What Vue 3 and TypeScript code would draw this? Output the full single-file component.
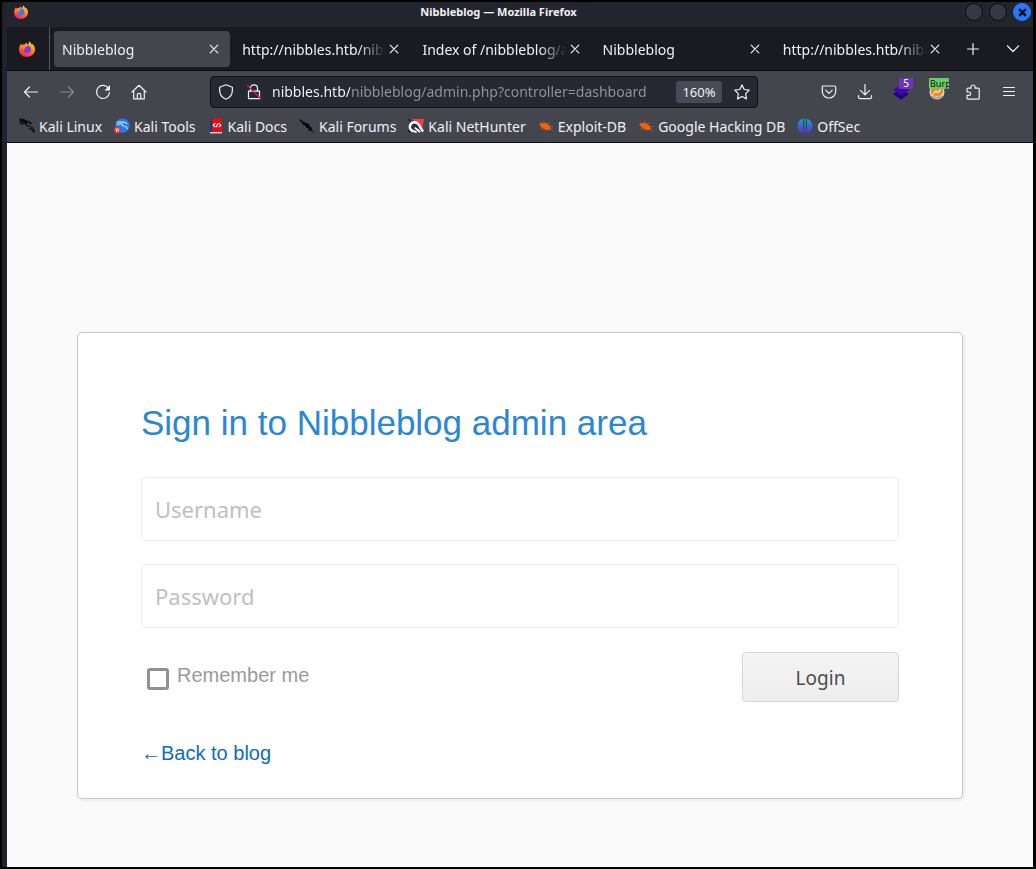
<script setup lang="ts">
import { ref } from 'vue'

interface Tab {
  id: number
  title: string
}

interface Bookmark {
  label: string
  icon: string
}

const tabs: Tab[] = [
  { id: 1, title: 'Nibbleblog' },
  { id: 2, title: 'http://nibbles.htb/nibbleblog/' },
  { id: 3, title: 'Index of /nibbleblog/admin' },
  { id: 4, title: 'Nibbleblog' },
  { id: 5, title: 'http://nibbles.htb/nibbleblog/' },
]

const bookmarks: Bookmark[] = [
  { label: 'Kali Linux', icon: 'dragon' },
  { label: 'Kali Tools', icon: 'tools' },
  { label: 'Kali Docs', icon: 'docs' },
  { label: 'Kali Forums', icon: 'forums' },
  { label: 'Kali NetHunter', icon: 'nethunter' },
  { label: 'Exploit-DB', icon: 'bug' },
  { label: 'Google Hacking DB', icon: 'bug' },
  { label: 'OffSec', icon: 'offsec' },
]

const activeTab = ref(1)
const address = ref('nibbles.htb/nibbleblog/admin.php?controller=dashboard')
const username = ref('')
const password = ref('')
const remember = ref(false)
</script>

<template>
  <svg class="sprite" aria-hidden="true">
    <defs>
      <linearGradient id="fox-body" x1="0.8" y1="0" x2="0.3" y2="1">
        <stop offset="0" stop-color="#ffe045" />
        <stop offset="0.45" stop-color="#ff8a1e" />
        <stop offset="0.8" stop-color="#ff3b4a" />
        <stop offset="1" stop-color="#e8206c" />
      </linearGradient>
      <linearGradient id="offsec-fill" x1="0" y1="0" x2="0" y2="1">
        <stop offset="0" stop-color="#12a5c9" />
        <stop offset="1" stop-color="#5a2be0" />
      </linearGradient>
      <symbol id="fox-tail" viewBox="0 0 16 16">
        <path fill="url(#fox-body)" d="M10 0.2C12 1.6 12.6 2.8 13 4C13.4 3.7 13.5 3.2 13.5 2.8C15 4.3 16 6.2 16 8.6C16 12.6 12.5 16 8 16C3.5 16 0 12.7 0 8.5C0 6 1 4 2.2 2.8L3 4.2C4 3.4 5 3.2 6 3.4C6.5 2.7 7.3 2 8.2 1.8C8 2.8 8.4 3.5 9 3.8C9.8 3 10.3 1.6 10 0.2Z" />
      </symbol>
    </defs>
    <symbol id="dragon" viewBox="0 0 16 16">
      <path d="M0.5 1.2C3 1 5.5 1.5 7.5 3.2M0.8 2.8C3 2.4 5 2.8 7 3.6M0.8 5C3 3.4 6 3.6 8.6 4.6M2.2 6.4C4 5.2 6 5 7.5 5.3C6 6.8 7.5 8 10 8.2C13.5 8.6 15 10 15.2 14.8C14 12 12.5 10.8 10.2 10.4M7.5 3.2C9.5 3 11 3.6 12.5 5.8L10.5 5.2" fill="none" stroke="#08090b" stroke-width="1.1" stroke-linecap="round" stroke-linejoin="round" />
    </symbol>
    <symbol id="tools" viewBox="0 0 16 16">
      <circle cx="8.4" cy="7.6" r="7.2" fill="#267df2" />
      <path d="M2.6 4.4C5 3.5 8 3.8 9.5 5M3 7C6 4.8 8 5.6 8 7C8.5 8.6 12.5 7.2 13.8 11M9 4C11 3.8 12.5 5 13 6.2" fill="none" stroke="#c9e2ff" stroke-width="1.1" />
      <circle cx="3.3" cy="12.4" r="3.3" fill="#ec2529" />
      <path d="M1.3 11.1H5.4M2.4 11.3V14.1M4.2 11.3V14.1" stroke="#fff" stroke-width="0.9" />
    </symbol>
    <symbol id="docs" viewBox="0 0 16 16">
      <path d="M2 0.5H4V15H2Z" fill="#193a73" />
      <path d="M4 0.5H14V14H4Z" fill="#e30b14" />
      <path d="M2 14H14V15.4H2Z" fill="#d8d6d6" />
      <path d="M7.2 5.2L5.2 7.2L7.2 9.2M10.8 5.2L12.8 7.2L10.8 9.2M9.9 5.4L8.1 9.2" fill="none" stroke="#fff" stroke-width="1.2" />
    </symbol>
    <symbol id="forums" viewBox="0 0 16 16">
      <path d="M0 0.5L4 3.4L7 5L9.5 5.5L10.5 8L13 10L12.5 11.5L16 15.4L11.5 12.5L9.5 12.8L9.8 10.8L7 9.5L6.4 7.6L3.5 7L4.3 5.5L1.5 3.8Z" fill="#060708" />
    </symbol>
    <symbol id="nethunter" viewBox="0 0 16 16">
      <path d="M3.5 1H16L14 12.5L9 4.5Z" fill="#ff3940" />
      <path d="M0.4 1.4L2.6 3M0.4 12L2 14.6" stroke="#15161a" stroke-width="1.3" />
      <path d="M5 13.2C2.2 12.2 0.9 8.8 2.7 6.2C4.6 3.5 8.6 3.6 10.6 6.4L15 13.6" fill="none" stroke="#fff" stroke-width="2.4" />
      <path d="M5 13.2L8.6 14M7 9.6L12 14" fill="none" stroke="#fff" stroke-width="1.8" />
      <path d="M4.6 10.6C3.6 8.4 5.6 6.6 7.6 7.4L10 10" fill="none" stroke="#18191c" stroke-width="1.2" />
    </symbol>
    <symbol id="bug" viewBox="0 0 16 16">
      <path d="M1.6 6.3L4 4.8L6.4 5.2L8.6 4.9L12.2 8.6L13 11.8L8.8 11.9L5.4 10.8L2.8 8.8Z" fill="#ef610c" />
      <path d="M3 5.4L2 3.6M6.5 5.4L6 2.9M9.5 6.2L12 4.9M12 8.6L15.4 8.4M12.5 10.8L15 12.8M8 11.4L8.4 13.2M4.6 10.2L2.4 11.3M2 6.8L0.5 6.5" stroke="#c95715" stroke-width="0.8" fill="none" />
    </symbol>
    <symbol id="offsec" viewBox="0 0 16 16">
      <path d="M6 0.8V15.2C2.8 14.5 0.6 11.6 0.6 8S2.8 1.5 6 0.8ZM10 0.8C13.2 1.5 15.4 4.4 15.4 8S13.2 14.5 10 15.2ZM7.3 0.5H8.7V15.5H7.3Z" fill="url(#offsec-fill)" />
    </symbol>
  </svg>

  <div class="window">
    <header class="titlebar">
      <svg class="app-logo" viewBox="0 0 16 16" aria-hidden="true">
        <use href="#fox-tail" />
        <circle cx="8" cy="8" r="3.9" fill="#3d7bea" />
        <path d="M2.7 4.2C4.2 3.5 6 3.5 7 4.5C8.2 4.6 8.5 5.2 7.2 5.8C5.8 6.3 6 8.5 4.2 8.5Z" fill="#ff8a20" />
      </svg>
      <span class="window-title">Nibbleblog — Mozilla Firefox</span>
      <div class="window-buttons">
        <button class="win" type="button" aria-label="Minimize"></button>
        <button class="win" type="button" aria-label="Maximize"></button>
        <button class="win close" type="button" aria-label="Close window">
          <svg viewBox="0 0 8 8"><path d="M1 1L7 7M7 1L1 7" stroke="#0b0d14" stroke-width="2.2" /></svg>
        </button>
      </div>
    </header>

    <nav class="tabbar" aria-label="Tabs">
      <button class="view" type="button" aria-label="Firefox View">
        <svg viewBox="0 0 16 16">
          <use href="#fox-tail" />
          <circle cx="8.2" cy="8.4" r="3.7" fill="#7440dc" />
          <path d="M2.7 4.2C4.2 3.5 6 3.5 7 4.5C8.2 4.6 8.8 5.6 7.2 6C5.8 6.5 6 8.5 4.2 8.5Z" fill="#ff8a20" />
        </svg>
      </button>
      <div class="tabs">
        <div v-for="tab in tabs" :key="tab.id" class="tab" :class="{ active: tab.id === activeTab }">
          <button class="tab-title" type="button" @click="activeTab = tab.id">{{ tab.title }}</button>
          <button class="tab-close" type="button" aria-label="Close tab">
            <svg viewBox="0 0 16 16"><path d="M4.2 4.2L11.8 11.8M11.8 4.2L4.2 11.8" /></svg>
          </button>
        </div>
      </div>
      <button class="tool" type="button" aria-label="New tab">
        <svg viewBox="0 0 16 16"><path d="M8 2.5V13.5M2.5 8H13.5" /></svg>
      </button>
      <button class="tool" type="button" aria-label="List all tabs">
        <svg viewBox="0 0 16 16"><path d="M2.5 5L8 10.5L13.5 5" /></svg>
      </button>
    </nav>

    <div class="toolbar">
      <div class="tools">
        <button class="tool" type="button" aria-label="Back">
          <svg viewBox="0 0 16 16"><path d="M14.5 8H1.5M6.5 3L1.5 8L6.5 13" /></svg>
        </button>
        <button class="tool dim" type="button" aria-label="Forward">
          <svg viewBox="0 0 16 16"><path d="M1.5 8H14.5M9.5 3L14.5 8L9.5 13" /></svg>
        </button>
        <button class="tool" type="button" aria-label="Reload">
          <svg viewBox="0 0 16 16"><path d="M13.6 4.6A6.5 6.5 0 1 0 14.5 8.5" /><path d="M15 1V6.4H9.6Z" fill="#fbfbfe" stroke="none" /></svg>
        </button>
        <button class="tool" type="button" aria-label="Home">
          <svg viewBox="0 0 16 16"><path d="M1 8L8 1.3L15 8M2.7 7V14.8H13.3V7M6.3 14.5V10.5Q6.3 9.4 8 9.4T9.7 10.5V14.5" /></svg>
        </button>
      </div>

      <div class="address">
        <button class="tool small" type="button" aria-label="Tracking protection">
          <svg viewBox="0 0 16 16"><path d="M8 0.8L14.4 3.2V6C14.4 10.4 12 13.8 8 15.2C4 13.8 1.6 10.4 1.6 6V3.2Z" /></svg>
        </button>
        <button class="tool small" type="button" aria-label="Connection is not secure">
          <svg viewBox="0 0 16 16"><path d="M4.5 7V4.2C4.5 2 6 0.8 8 0.8S11.5 2 11.5 4.2V7M2.5 7.2H13.5V14.7H2.5Z" /><path d="M1.5 1.5L15 15" stroke="#e8184f" /></svg>
        </button>
        <input v-model="address" class="url" type="text" aria-label="Address" spellcheck="false" />
        <button class="zoom" type="button">160%</button>
        <button class="tool small" type="button" aria-label="Bookmark this page">
          <svg viewBox="0 0 16 16"><path d="M8 0.9L10.2 5.5L15.2 6.2L11.6 9.8L12.5 14.9L8 12.5L3.5 14.9L4.4 9.8L0.8 6.2L5.8 5.5Z" /></svg>
        </button>
      </div>

      <div class="tools">
        <button class="tool" type="button" aria-label="Save to Pocket">
          <svg viewBox="0 0 16 16"><path d="M2.3 2H13.7Q14.7 2 14.7 3V7.5C14.7 11.5 11.5 14 8 14S1.3 11.5 1.3 7.5V3Q1.3 2 2.3 2ZM4.8 6.2L8 9.4L11.2 6.2" /></svg>
        </button>
        <button class="tool" type="button" aria-label="Downloads">
          <svg viewBox="0 0 16 16"><path d="M8 0.5V10.5M3.5 6.3L8 10.8L12.5 6.3M1.5 11.5V13Q1.5 14.7 3.2 14.7H12.8Q14.5 14.7 14.5 13V11.5" /></svg>
        </button>
        <button class="tool" type="button" aria-label="Wappalyzer">
          <svg viewBox="0 0 16 16"><path d="M8 5.5L16 10L8 15.5L0 10Z" fill="#22007a" stroke="none" /><path d="M8 1L16 6L8 11.5L0 6Z" fill="#4307ad" stroke="none" /></svg>
          <span class="badge count">5</span>
        </button>
        <button class="tool" type="button" aria-label="FoxyProxy">
          <svg viewBox="0 0 16 16">
            <circle cx="8" cy="8" r="7.5" fill="#e5d5c5" stroke="none" />
            <path d="M1.7 4H14.3L13.8 9.4L10.6 12.2H5.6L2.2 9.4Z" fill="#f28b27" stroke="none" />
            <path d="M4.6 9.4L7 7L8.6 8.6L11.4 6" stroke="#fff0da" />
            <path d="M3.6 12.4Q8 15.4 12.4 12.4" stroke="#9d8f86" />
          </svg>
          <span class="badge proxy">Burp</span>
        </button>
        <button class="tool" type="button" aria-label="Extensions">
          <svg viewBox="0 0 16 16"><path d="M2 5.2Q2 4.2 3 4.2H6V3A2 2 0 0 1 10 3V4.2H13.2Q14.2 4.2 14.2 5.2V14.2Q14.2 15.2 13.2 15.2H3Q2 15.2 2 14.2V11.4H4A1.7 1.7 0 0 0 4 8H2Z" /></svg>
        </button>
        <button class="tool" type="button" aria-label="Menu">
          <svg viewBox="0 0 16 16"><path d="M2.5 3.5H13.5M2.5 7.5H13.5M2.5 11.5H13.5" /></svg>
        </button>
      </div>
    </div>

    <nav class="bookmarks" aria-label="Bookmarks">
      <a v-for="bookmark in bookmarks" :key="bookmark.label" href="#">
        <svg viewBox="0 0 16 16" aria-hidden="true"><use :href="'#' + bookmark.icon" /></svg>
        <span>{{ bookmark.label }}</span>
      </a>
    </nav>

    <main class="page">
      <form class="card" @submit.prevent>
        <h1>Sign in to Nibbleblog admin area</h1>
        <input v-model="username" class="field" type="text" placeholder="Username" aria-label="Username" />
        <input v-model="password" class="field" type="password" placeholder="Password" aria-label="Password" />
        <div class="actions">
          <label class="remember">
            <input v-model="remember" type="checkbox" />
            <span>Remember me</span>
          </label>
          <button class="login" type="submit">Login</button>
        </div>
        <a class="back" href="#">←Back to blog</a>
      </form>
    </main>
  </div>
</template>

<style>
body {
  margin: 0;
  background: #000;
}
</style>

<style scoped>
* {
  box-sizing: border-box;
}

button,
input {
  margin: 0;
  padding: 0;
  border: 0;
  background: none;
  color: inherit;
  font: inherit;
}

.sprite {
  position: absolute;
  width: 0;
  height: 0;
}

.window {
  display: flex;
  flex-direction: column;
  min-height: 100vh;
  padding-left: 5px;
  border: solid #000;
  border-width: 2px 3px 2px 2px;
  background: #21232c;
  color: #f0f0f4;
  font-family: "Noto Sans", sans-serif;
  font-size: 14px;
}

.titlebar {
  display: flex;
  align-items: center;
  height: 25px;
  padding: 0 2px 5px 7px;
  background: #23252e;
}

.app-logo {
  width: 14px;
  height: 14px;
}

.window-title {
  flex: 1;
  padding-left: 4px;
  text-align: center;
  font-size: 11px;
  font-weight: 700;
  line-height: 20px;
}

.window-buttons {
  display: flex;
  gap: 6px;
}

.win {
  display: grid;
  place-items: center;
  width: 18px;
  height: 18px;
  border: 1px solid #08090d;
  border-radius: 50%;
  background: #353944;
}

.win.close {
  border-color: #2777ff;
  background: #2777ff;
}

.win svg {
  width: 9px;
  height: 9px;
}

.tabbar {
  display: flex;
  align-items: center;
  height: 44px;
  border-bottom: 1px solid #0c0c10;
  background: #1a1b20;
}

.view {
  display: grid;
  place-items: center;
  align-self: stretch;
  width: 43px;
  padding-right: 2px;
  border-right: 1px solid #55565c;
}

.view svg {
  width: 16px;
  height: 16px;
}

.tabs {
  display: flex;
  flex: 1;
  gap: 4px;
  min-width: 0;
  padding: 0 2px 0 4px;
}

.tab {
  display: flex;
  flex: 1;
  align-items: center;
  min-width: 0;
  height: 36px;
  padding: 0 8px;
  border-radius: 4px;
}

.tab.active {
  background: #44464d;
}

.tab-title {
  flex: 1;
  min-width: 0;
  padding-top: 2px;
  overflow: hidden;
  text-align: left;
  white-space: nowrap;
  mask-image: linear-gradient(to left, transparent, #000 28px);
}

.tab-close {
  display: grid;
  width: 16px;
  height: 16px;
}

.tab-close svg,
.tool svg {
  fill: none;
  stroke: #f0f0f4;
  stroke-width: 1.2;
  stroke-linecap: round;
  stroke-linejoin: round;
}

.tool {
  position: relative;
  display: grid;
  flex: none;
  place-items: center;
  width: 36px;
  height: 36px;
}

.tabbar .tool {
  width: 40px;
}

.tool svg {
  width: 16px;
  height: 16px;
}

.tool.dim svg {
  opacity: 0.4;
}

.toolbar {
  display: flex;
  align-items: center;
  gap: 53px;
  height: 41px;
  padding: 0 6px;
  background: #44464d;
}

.tools {
  display: flex;
}

.address {
  display: flex;
  flex: 1;
  align-items: center;
  min-width: 0;
  height: 32px;
  padding: 0 1px;
  border: 1px solid #0f1014;
  border-radius: 4px;
  background: #262833;
}

.tool.small {
  width: 28px;
  height: 28px;
}

.url {
  flex: 1;
  min-width: 0;
  height: 28px;
  margin: 0 16px 0 4px;
  outline: 0;
  background: linear-gradient(to right, #fbfbfe 78px, #94959b 78px);
  background-clip: text;
  color: transparent;
}

.zoom {
  width: 46px;
  height: 22px;
  margin-right: 6px;
  border-radius: 3px;
  background: #484a55;
  font-size: 13px;
}

.badge {
  position: absolute;
  top: 4px;
  overflow: hidden;
  color: #fff;
  font-size: 10px;
  line-height: 11px;
}

.count {
  left: 16px;
  width: 14px;
  border-radius: 1px;
  background: #6c35bd;
}

.proxy {
  left: 10px;
  width: 20px;
  border-radius: 1px;
  background: #66cd69;
  color: #111;
  font-size: 9px;
  text-align: left;
  text-indent: 1px;
}

.bookmarks {
  display: flex;
  gap: 12px;
  height: 31px;
  padding: 0 12px 2px;
  border-bottom: 1px solid #0c0c10;
  background: #44464d;
}

.bookmarks a {
  display: flex;
  align-items: center;
  gap: 4px;
  color: #f0f0f4;
  text-decoration: none;
  white-space: nowrap;
}

.bookmarks svg {
  width: 16px;
  height: 16px;
}

.page {
  flex: 1;
  padding: 189px 70px 68px;
  background: #fafafa;
  font-family: "Liberation Sans", sans-serif;
}

.card {
  display: flex;
  flex-direction: column;
  padding: 66px 63px 33px;
  border: 1px solid #c8c8c8;
  border-radius: 5px;
  background: #fff;
  box-shadow: 1px 1px 4px rgba(0, 0, 0, 0.08);
}

h1 {
  margin: 0 0 30px;
  color: #2a87d4;
  font-size: 35px;
  font-weight: 400;
  line-height: 48px;
}

.field {
  height: 64px;
  margin-bottom: 23px;
  padding: 0 13px;
  border: 1px solid #eee;
  border-radius: 4px;
  color: #444;
  font-family: "Noto Sans", sans-serif;
  font-size: 22px;
}

.field::placeholder {
  color: #bfbfbf;
}

.actions {
  display: flex;
  align-items: flex-start;
  justify-content: space-between;
  margin-top: 1px;
}

.remember {
  display: flex;
  gap: 8px;
  padding: 11px 0 0 6px;
  color: #9a9a9a;
  font-size: 20px;
  line-height: 24px;
}

.remember input {
  width: 22px;
  height: 22px;
  margin-top: 5px;
  border: 3px solid #8f8f9d;
  border-radius: 3px;
  background: #fff;
  appearance: none;
}

.remember input:checked {
  background: #0060df;
}

.login {
  width: 157px;
  height: 50px;
  padding-top: 2px;
  border: 1px solid #d6d6d6;
  border-radius: 4px;
  background: linear-gradient(#f4f4f4, #eee);
  color: #4b4b4b;
  font-family: "Noto Sans", sans-serif;
  font-size: 19px;
}

.back {
  align-self: flex-start;
  margin-top: 39px;
  color: #0b6cc6;
  font-size: 20px;
  line-height: 24px;
  text-decoration: none;
}
</style>
